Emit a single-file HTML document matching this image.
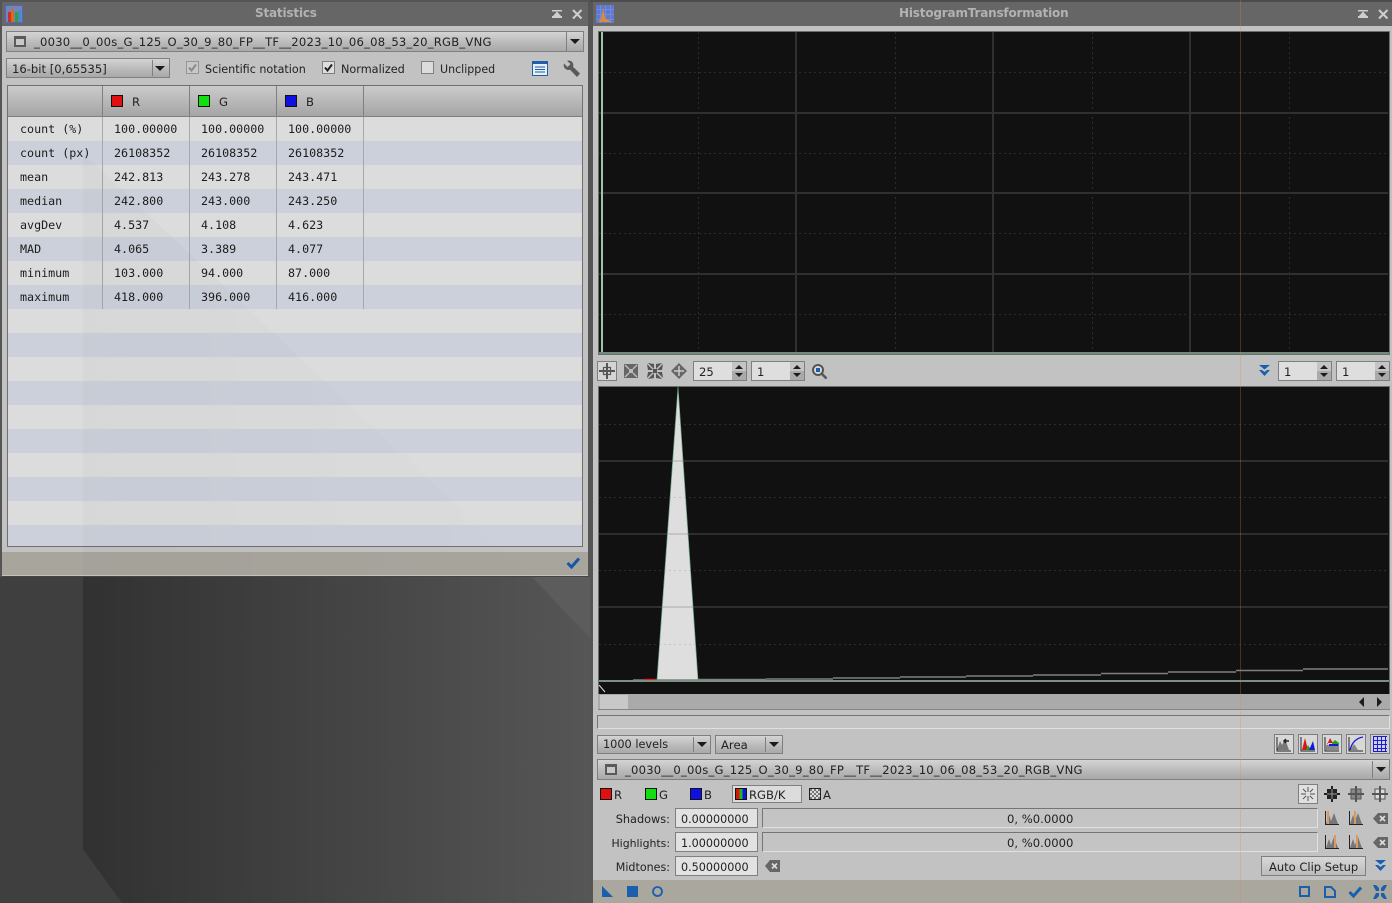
<!DOCTYPE html>
<html lang="en"><head><meta charset="utf-8"><title>Statistics and HistogramTransformation</title>
<style>
html,body{margin:0;padding:0;width:1392px;height:903px;overflow:hidden;background:#3f3f3f}
body{position:relative;font:11.6px "DejaVu Sans","Liberation Sans",sans-serif;color:#222}
div,svg,span.a{position:absolute;box-sizing:border-box}
.t{white-space:nowrap;line-height:14px;height:14px}
.r{text-align:right}
.m{font:11.7px "DejaVu Sans Mono","Liberation Mono",monospace;color:#1c1c1c}
.bar{background:#666}
.title{font-weight:bold;font-size:12px;color:#b2b2b2;letter-spacing:-.18px}
.file{letter-spacing:.22px}
.combo{border:1px solid #7f7f7f;background:linear-gradient(#d4d4d4,#b8b8b8 60%,#a9a9a9)}
.sep{width:1px;background:#7f7f7f;top:2px;bottom:2px}
.arr{width:0;height:0;border-left:5px solid transparent;border-right:5px solid transparent;border-top:5px solid #1c1c1c}
.in{border:1px solid #7f7f7f;background:#dedede}
.trk{border:1px solid;border-color:#757575 #e0e0e0 #e0e0e0 #757575;background:#c4c4c4}
.sw{width:13px;height:13px;border:1px solid #111}
.col{width:1px;top:117px;height:192px;background:#a8a8a8}
.hcol{width:1px;top:86px;height:31px;background:#7f7f7f}
.ib{width:20px;height:20px;border:1px solid #7f7f7f;background:#d8d8d8}
.v{font-size:11.2px}
</style></head><body>

<!-- desktop -->
<svg style="left:0;top:0" width="592" height="903">
<defs><linearGradient id="d" x1="0" x2="1" y1="0" y2="0"><stop offset="0" stop-color="#313131"/><stop offset="1" stop-color="#565656"/></linearGradient></defs>
<rect width="592" height="903" fill="#3f3f3f"/>
<polygon points="83,570 590,570 590,903 122,903 83,849" fill="url(#d)"/>
<polygon points="532,577 590,577 590,638" fill="#5c5c5c"/>
</svg>

<!-- Statistics window -->
<div style="left:0;top:0;width:590px;height:577px;background:#c2c2c2;border:2px solid #555;border-bottom:1px solid #454545;border-left-width:2px"></div>
<div class="bar" style="left:2px;top:2px;width:586px;height:24px"></div>
<div class="t title" style="left:255px;top:6px">Statistics</div>
<svg style="left:5px;top:5px" width="18" height="18"><rect width="18" height="18" fill="#5566b4"/><rect x="1" y="1" width="16" height="16" fill="#7484bc"/><rect x="3" y="7" width="3" height="10" fill="#c83030"/><rect x="6" y="4" width="3" height="13" fill="#d86a20"/><rect x="10" y="7" width="3" height="10" fill="#3a9a40"/><rect x="13" y="5" width="3" height="12" fill="#3a90d0"/></svg>
<svg style="left:552px;top:10px" width="11" height="10"><rect x="0" y="0" width="10" height="1.500" fill="#cfcfcf"/><polygon points="5,1.500 9,6 1,6" fill="#cfcfcf"/><rect x="0" y="6" width="10" height="2" fill="#cfcfcf"/></svg>
<svg style="left:572px;top:9px" width="11" height="11"><path d="M1 1 9.500 9.500M9.500 1 1 9.500" stroke="#cfcfcf" stroke-width="2"/></svg>

<div class="combo" style="left:6px;top:31px;width:578px;height:21px"></div>
<div class="sep" style="left:566px;top:32px;height:19px"></div>
<div class="arr" style="left:570px;top:39px"></div>
<div style="left:14px;top:36px;width:12px;height:11px;border:2px solid #5a5a5a;border-top-width:3px;background:#c8c8c8"></div>
<div class="t file" style="left:34px;top:35px">_0030__0_00s_G_125_O_30_9_80_FP__TF__2023_10_06_08_53_20_RGB_VNG</div>

<div class="combo" style="left:6px;top:58px;width:164px;height:20px"></div>
<div class="sep" style="left:152px;top:60px;height:16px"></div>
<div class="arr" style="left:155px;top:66px"></div>
<div class="t" style="left:12px;top:62px">16-bit [0,65535]</div>

<div style="left:186px;top:61px;width:13px;height:13px;border:1px solid #959595;background:#c8c8c8"></div>
<svg style="left:186px;top:61px" width="13" height="13"><path d="M3 6.500 5.500 9.500 10 3.500" fill="none" stroke="#8a8a8a" stroke-width="2"/></svg>
<div class="t" style="left:205px;top:63px;font-size:11.15px">Scientific notation</div>
<div style="left:322px;top:61px;width:13px;height:13px;border:1px solid #7f7f7f;background:#dedede"></div>
<svg style="left:322px;top:61px" width="13" height="13"><path d="M3 6.500 5.500 9.500 10 3.500" fill="none" stroke="#222" stroke-width="2"/></svg>
<div class="t" style="left:341px;top:63px;font-size:11.25px">Normalized</div>
<div style="left:421px;top:61px;width:13px;height:13px;border:1px solid #7f7f7f;background:#dcdcdc"></div>
<div class="t" style="left:440px;top:63px;font-size:11.05px">Unclipped</div>
<svg style="left:532px;top:61px" width="16" height="15"><rect x=".5" y=".5" width="15" height="14" fill="#e8eef5" stroke="#1f5fa8"/><rect width="16" height="3" fill="#1f5fa8"/><path d="M3 6H13M3 8.500H13M3 11H13" stroke="#1f5fa8"/></svg>
<svg style="left:563px;top:60px" width="18" height="18"><path d="M1 3.500 4.500 7 7.500 4 4 .8C8 -.5 11.500 3 10 6.800L17 13.500 14 17 7 9.800C3.500 11 -.5 7.500 1 3.500Z" fill="#5a5a5a"/></svg>

<!-- table -->
<div style="left:7px;top:85px;width:576px;height:462px;border:1px solid #707070;background:#dcdcdc"></div>
<div style="left:8px;top:86px;width:574px;height:31px;background:linear-gradient(#cbcbcb,#a5a5a5);border-bottom:1px solid #7f7f7f"></div>
<div style="left:8px;top:141px;width:574px;height:24px;background:#ccd0da"></div>
<div style="left:8px;top:189px;width:574px;height:24px;background:#ccd0da"></div>
<div style="left:8px;top:237px;width:574px;height:24px;background:#ccd0da"></div>
<div style="left:8px;top:285px;width:574px;height:24px;background:#ccd0da"></div>
<div style="left:8px;top:333px;width:574px;height:24px;background:#ccd0da"></div>
<div style="left:8px;top:381px;width:574px;height:24px;background:#ccd0da"></div>
<div style="left:8px;top:429px;width:574px;height:24px;background:#ccd0da"></div>
<div style="left:8px;top:477px;width:574px;height:24px;background:#ccd0da"></div>
<div style="left:8px;top:525px;width:574px;height:21px;background:#ccd0da"></div>
<div class="hcol" style="left:102px"></div><div class="hcol" style="left:189px"></div><div class="hcol" style="left:276px"></div><div class="hcol" style="left:363px"></div>
<div class="col" style="left:102px"></div><div class="col" style="left:189px"></div><div class="col" style="left:276px"></div><div class="col" style="left:363px"></div>
<div class="sw" style="left:111px;top:95px;width:12px;height:12px;background:#e01010"></div><div class="t" style="left:132px;top:95px">R</div>
<div class="sw" style="left:198px;top:95px;width:12px;height:12px;background:#10e010"></div><div class="t" style="left:219px;top:95px">G</div>
<div class="sw" style="left:285px;top:95px;width:12px;height:12px;background:#1010e0"></div><div class="t" style="left:306px;top:95px">B</div>

<div class="t m" style="left:20px;top:122px">count (%)</div><div class="t m" style="left:114px;top:122px">100.00000</div><div class="t m" style="left:201px;top:122px">100.00000</div><div class="t m" style="left:288px;top:122px">100.00000</div>
<div class="t m" style="left:20px;top:146px">count (px)</div><div class="t m" style="left:114px;top:146px">26108352</div><div class="t m" style="left:201px;top:146px">26108352</div><div class="t m" style="left:288px;top:146px">26108352</div>
<div class="t m" style="left:20px;top:170px">mean</div><div class="t m" style="left:114px;top:170px">242.813</div><div class="t m" style="left:201px;top:170px">243.278</div><div class="t m" style="left:288px;top:170px">243.471</div>
<div class="t m" style="left:20px;top:194px">median</div><div class="t m" style="left:114px;top:194px">242.800</div><div class="t m" style="left:201px;top:194px">243.000</div><div class="t m" style="left:288px;top:194px">243.250</div>
<div class="t m" style="left:20px;top:218px">avgDev</div><div class="t m" style="left:114px;top:218px">4.537</div><div class="t m" style="left:201px;top:218px">4.108</div><div class="t m" style="left:288px;top:218px">4.623</div>
<div class="t m" style="left:20px;top:242px">MAD</div><div class="t m" style="left:114px;top:242px">4.065</div><div class="t m" style="left:201px;top:242px">3.389</div><div class="t m" style="left:288px;top:242px">4.077</div>
<div class="t m" style="left:20px;top:266px">minimum</div><div class="t m" style="left:114px;top:266px">103.000</div><div class="t m" style="left:201px;top:266px">94.000</div><div class="t m" style="left:288px;top:266px">87.000</div>
<div class="t m" style="left:20px;top:290px">maximum</div><div class="t m" style="left:114px;top:290px">418.000</div><div class="t m" style="left:201px;top:290px">396.000</div><div class="t m" style="left:288px;top:290px">416.000</div>

<div style="left:2px;top:552px;width:586px;height:23px;background:#a8a59d"></div>
<svg style="left:566px;top:556px" width="15" height="14"><path d="M1.500 7 5.500 11 13 2.500" fill="none" stroke="#1558a8" stroke-width="3"/></svg>
<!-- window translucency -->
<svg style="left:0;top:0" width="592" height="577"><defs><linearGradient id="w" x1="0" x2="1" y1="0" y2="0"><stop offset="0" stop-color="#000" stop-opacity=".022"/><stop offset="1" stop-color="#000" stop-opacity=".004"/></linearGradient></defs><polygon points="83,153 83,575 530,575" fill="url(#w)"/></svg>

<!-- Histogram window -->
<div style="left:590px;top:0;width:3px;height:903px;background:#555"></div>
<div style="left:593px;top:0;width:799px;height:903px;background:#c2c2c2"></div>
<div style="left:590px;top:0;width:802px;height:2px;background:#4c4c4c"></div>
<div class="bar" style="left:593px;top:2px;width:799px;height:24px"></div>
<div class="t title" style="left:899px;top:6px">HistogramTransformation</div>
<svg style="left:596px;top:5px" width="18" height="18"><rect width="18" height="18" fill="#5f78d0"/><path d="M4.500 0V18M9.500 0V18M14.500 0V18M0 4.500H18M0 9.500H18M0 14.500H18" stroke="#7f92dc" opacity=".7"/><path d="M2 17 5 14 7 3 9 13 12 15 16 17Z" fill="#dd8a3a"/></svg>
<svg style="left:1358px;top:10px" width="11" height="10"><rect x="0" y="0" width="10" height="1.500" fill="#cfcfcf"/><polygon points="5,1.500 9,6 1,6" fill="#cfcfcf"/><rect x="0" y="6" width="10" height="2" fill="#cfcfcf"/></svg>
<svg style="left:1378px;top:9px" width="11" height="11"><path d="M1 1 9.500 9.500M9.500 1 1 9.500" stroke="#cfcfcf" stroke-width="2"/></svg>

<!-- top plot -->
<svg style="left:598px;top:31px" width="792" height="324" shape-rendering="crispEdges">
<rect width="792" height="324" fill="#111"/>
<rect x=".5" y=".5" width="791" height="323" fill="none" stroke="#6e6e6e"/>
<path d="M198 1V322M395 1V322M592 1V322M1 82H790M1 162H790M1 243H790" stroke="#303030" stroke-width="2"/>
<path d="M100.500 1V322M297.500 1V322M494.500 1V322M691.500 1V322M1 41.500H790M1 122.500H790M1 202.500H790M1 283.500H790" stroke="#2c2c2c" stroke-dasharray="2 3"/>
<rect x="3" y="1" width="2" height="321" fill="#9cc5ac"/>
<rect x="1" y="321" width="790" height="2" fill="#6f8a78"/>
</svg>

<!-- toolbar -->
<div class="ib" style="left:597px;top:361px;background:#d4d4d4"></div>
<svg style="left:597px;top:361px" width="20" height="20" fill="none" stroke="#555" stroke-width="2"><path d="M10 2V18M2 10H18"/><rect x="6.500" y="6.500" width="7" height="7" stroke-width="1.200"/></svg>
<svg style="left:623px;top:363px" width="16" height="16"><rect x="1" y="1" width="14" height="14" fill="#666"/><path d="M2 2 6 6M14 2 10 6M2 14 6 10M14 14 10 10" stroke="#bbb" stroke-width="1.500"/><rect x="6" y="6" width="4" height="4" fill="#bbb"/></svg>
<svg style="left:647px;top:363px" width="16" height="16" fill="#555"><path d="M1 0 7 6V1ZM15 0 9 6V1ZM1 16 7 10V15ZM15 16 9 10V15ZM0 1 6 7H1ZM16 1 10 7H15ZM0 15 6 9H1ZM16 15 10 9H15Z"/><rect x="6" y="6" width="4" height="4"/></svg>
<svg style="left:671px;top:363px" width="16" height="16"><polygon points="8,0 16,8 8,16 0,8" fill="#666"/><path d="M8 3V13M3 8H13" stroke="#ccc" stroke-width="1.500"/></svg>

<div class="in" style="left:693px;top:361px;width:54px;height:20px"></div><div class="t" style="left:699px;top:365px">25</div>
<div class="in" style="left:751px;top:361px;width:54px;height:20px"></div><div class="t" style="left:757px;top:365px">1</div>
<div class="in" style="left:1278px;top:361px;width:54px;height:20px"></div><div class="t" style="left:1284px;top:365px">1</div>
<div class="in" style="left:1336px;top:361px;width:54px;height:20px"></div><div class="t" style="left:1342px;top:365px">1</div>
<svg style="left:732px;top:362px" width="15" height="18"><rect width="14" height="18" fill="#c4c4c4"/><rect y="9" width="14" height="9" fill="#aaa"/><path d="M7 3 11 7H3ZM7 15 11 11H3Z" fill="#1c1c1c"/></svg>
<svg style="left:790px;top:362px" width="15" height="18"><rect width="14" height="18" fill="#c4c4c4"/><rect y="9" width="14" height="9" fill="#aaa"/><path d="M7 3 11 7H3ZM7 15 11 11H3Z" fill="#1c1c1c"/></svg>
<svg style="left:1317px;top:362px" width="15" height="18"><rect width="14" height="18" fill="#c4c4c4"/><rect y="9" width="14" height="9" fill="#aaa"/><path d="M7 3 11 7H3ZM7 15 11 11H3Z" fill="#1c1c1c"/></svg>
<svg style="left:1375px;top:362px" width="15" height="18"><rect width="14" height="18" fill="#c4c4c4"/><rect y="9" width="14" height="9" fill="#aaa"/><path d="M7 3 11 7H3ZM7 15 11 11H3Z" fill="#1c1c1c"/></svg>
<svg style="left:811px;top:363px" width="17" height="17"><circle cx="7" cy="7" r="5" fill="#d8d8d8" stroke="#555" stroke-width="2"/><rect x="5" y="5" width="4" height="4" fill="#1a5fae"/><path d="M10.500 10.500 15.500 15.500" stroke="#555" stroke-width="2.500"/></svg>
<svg style="left:1259px;top:365px" width="12" height="12" fill="#1a5fae"><path d="M0 0H11L5.500 4.500ZM0 5H3L5.500 7 8 5H11L5.500 11Z"/></svg>

<!-- bottom plot -->
<svg style="left:598px;top:386px" width="792" height="309">
<rect width="792" height="309" fill="#111"/>
<rect x=".5" y=".5" width="791" height="320" fill="none" stroke="#6e6e6e"/>
<polygon points="80,1 59,294 100,294" fill="#dedede" stroke="#6da883" stroke-width=".7"/>
<g shape-rendering="crispEdges" stroke="#808080" opacity=".26">
<path d="M1 75H790M1 148H790M1 221H790" stroke-width="2"/>
<path d="M1 38.500H790M1 111.500H790M1 184.500H790M1 258.500H790" stroke-dasharray="2 3"/>
</g>
<path d="M35 294H100M100 293.500H168M168 293H235M235 292H302M302 291H368M368 290H435M435 289H503M503 287.500H570M570 286H638M638 284.500H705M705 283H790" stroke="#808080" stroke-width="1.600" fill="none"/>
<path d="M47 293.500H57" stroke="#e02020" stroke-width="1.500"/>
<rect x="1" y="294" width="790" height="2" fill="#7d8e82"/>
<path d="M1 299 7 306" stroke="#ddd" stroke-width="1"/>
</svg>
<div style="left:598px;top:694px;width:792px;height:16px;background:#aaa;border-bottom:1px solid #858585"></div>
<div style="left:600px;top:695px;width:28px;height:14px;background:#c8c8c8"></div>
<svg style="left:1358px;top:697px" width="26" height="10" fill="#1c1c1c"><path d="M1 5 6 0V10ZM24 5 19 0V10Z"/></svg>

<div class="trk" style="left:597px;top:715px;width:793px;height:14px"></div>

<!-- combos -->
<div class="combo" style="left:597px;top:735px;width:114px;height:19px"></div><div class="sep" style="left:693px;top:737px;height:15px"></div><div class="arr" style="left:697px;top:742px"></div>
<div class="t" style="left:603px;top:738px;font-size:11.3px">1000 levels</div>
<div class="combo" style="left:715px;top:735px;width:68px;height:19px"></div><div class="sep" style="left:765px;top:737px;height:15px"></div><div class="arr" style="left:769px;top:742px"></div>
<div class="t" style="left:721px;top:738px">Area</div>

<div class="ib" style="left:1274px;top:734px"></div>
<svg style="left:1276px;top:736px" width="16" height="16"><path d="M1 14 4 5 6 9 9 3 13 14Z" fill="#777"/><path d="M1 1V15H15" fill="none" stroke="#222"/><path d="M13 5H8M10 3 8 5 10 7" fill="none" stroke="#222" stroke-width="1.500"/></svg>
<div class="ib" style="left:1298px;top:734px"></div>
<svg style="left:1300px;top:736px" width="16" height="16"><path d="M1 1V15H15" fill="none" stroke="#222"/><path d="M2 14 5 2 8 14Z" fill="#d81818"/><path d="M6 14 8 9 11 14Z" fill="#18a818"/><path d="M9 14 13 5 15 14Z" fill="#1818d8"/></svg>
<div class="ib" style="left:1322px;top:734px"></div>
<svg style="left:1324px;top:736px" width="16" height="16"><path d="M1 1V15H15" fill="none" stroke="#222"/><rect x="2" y="9" width="13" height="5" fill="#888"/><path d="M3 9 6 2 9 7H3Z" fill="#d81818"/><path d="M8 7 11 4 15 7 15 9H8Z" fill="#18a818"/><path d="M5 8H14V10H5Z" fill="#1818d8"/></svg>
<div class="ib" style="left:1346px;top:734px"></div>
<svg style="left:1348px;top:736px" width="16" height="16"><path d="M1 1V15H15" fill="none" stroke="#222"/><path d="M2 14 6 8 10 14Z" fill="#888"/><path d="M2 14C4 6 9 2 15 1" fill="none" stroke="#1818d8" stroke-width="1.300"/></svg>
<div class="ib" style="left:1370px;top:734px;background:#cfcfe0"></div>
<svg style="left:1372px;top:736px" width="16" height="16" shape-rendering="crispEdges"><path d="M1 .5H15M1 4.500H15M1 8.500H15M1 12.500H15M1 15.500H15M1.500 1V16M5.500 1V16M9.500 1V16M13.500 1V16" stroke="#1a1ad0"/></svg>

<div class="combo" style="left:597px;top:759px;width:793px;height:21px"></div><div class="sep" style="left:1372px;top:761px;height:17px"></div><div class="arr" style="left:1376px;top:767px"></div>
<div style="left:605px;top:764px;width:12px;height:11px;border:2px solid #5a5a5a;border-top-width:3px;background:#c8c8c8"></div>
<div class="t file" style="left:625px;top:763px">_0030__0_00s_G_125_O_30_9_80_FP__TF__2023_10_06_08_53_20_RGB_VNG</div>

<!-- channels -->
<div class="sw" style="left:600px;top:788px;width:12px;height:12px;background:#e01010"></div><div class="t" style="left:614px;top:788px">R</div>
<div class="sw" style="left:645px;top:788px;width:12px;height:12px;background:#10e010"></div><div class="t" style="left:659px;top:788px">G</div>
<div class="sw" style="left:690px;top:788px;width:12px;height:12px;background:#1010e0"></div><div class="t" style="left:704px;top:788px">B</div>
<div style="left:732px;top:785px;width:70px;height:18px;border:1px solid #7f7f7f;background:#dcdcdc"></div>
<div class="sw" style="left:735px;top:788px;width:12px;height:12px;background:linear-gradient(90deg,#e01010 33%,#10c010 33% 66%,#1010e0 66%)"></div>
<div class="t" style="left:749px;top:788px">RGB/K</div>
<svg style="left:809px;top:788px" width="12" height="12"><rect width="12" height="12" fill="#ddd"/><path d="M1 1H3V3H1ZM5 1H7V3H5ZM9 1H11V3H9ZM3 3H5V5H3ZM7 3H9V5H7ZM1 5H3V7H1ZM5 5H7V7H5ZM9 5H11V7H9ZM3 7H5V9H3ZM7 7H9V9H7ZM1 9H3V11H1ZM5 9H7V11H5ZM9 9H11V11H9Z" fill="#777"/><rect x=".5" y=".5" width="11" height="11" fill="none" stroke="#222"/></svg>
<div class="t" style="left:823px;top:788px">A</div>

<div class="ib" style="left:1298px;top:784px;background:#e0e0e0"></div>
<svg style="left:1300px;top:786px" width="16" height="16" stroke="#555"><path d="M8 1V15M1 8H15M3 3 13 13M13 3 3 13"/><rect x="6" y="6" width="4" height="4" fill="#e0e0e0" stroke="none"/></svg>
<svg style="left:1324px;top:786px" width="16" height="16"><rect x="3" y="3" width="10" height="10" fill="#222"/><path d="M8 0V16M0 8H16" stroke="#222" stroke-width="2"/><path d="M8 3V13M3 8H13" stroke="#999"/></svg>
<svg style="left:1348px;top:786px" width="16" height="16"><rect x="3" y="3" width="10" height="10" fill="#888" stroke="#555"/><path d="M8 0V16M0 8H16" stroke="#555" stroke-width="2"/></svg>
<svg style="left:1372px;top:786px" width="16" height="16"><rect x="3" y="3" width="10" height="10" fill="#ddd" stroke="#555"/><path d="M8 0V16M0 8H16" stroke="#555" stroke-width="2"/></svg>

<!-- levels -->
<div class="t r" style="left:590px;width:80px;top:813px;font-size:11.3px">Shadows:</div>
<div class="in" style="left:675px;top:808px;width:83px;height:20px;background:#e2e2e2"></div><div class="t v" style="left:681px;top:813px">0.00000000</div>
<div class="trk" style="left:762px;top:808px;width:556px;height:20px"></div><div class="t" style="left:1007px;top:812px">0, %0.0000</div>
<div class="t r" style="left:590px;width:80px;top:837px;font-size:10.9px">Highlights:</div>
<div class="in" style="left:675px;top:832px;width:83px;height:20px;background:#e2e2e2"></div><div class="t v" style="left:681px;top:837px">1.00000000</div>
<div class="trk" style="left:762px;top:832px;width:556px;height:20px"></div><div class="t" style="left:1007px;top:836px">0, %0.0000</div>
<div class="t r" style="left:590px;width:80px;top:861px;font-size:11.1px">Midtones:</div>
<div class="in" style="left:675px;top:856px;width:83px;height:20px;background:#e2e2e2"></div><div class="t v" style="left:681px;top:861px">0.50000000</div>
<svg style="left:765px;top:860px" width="15" height="12"><path d="M0 6 5 0H15V12H5Z" fill="#666"/><path d="M7 3.500 12 8.500M12 3.500 7 8.500" stroke="#ddd" stroke-width="1.600"/></svg>

<svg style="left:1325px;top:811px" width="14" height="14"><path d="M1 13 4 4 6 10 9 2 13 13Z" fill="#777"/><path d="M.5 0V13.500H14" fill="none" stroke="#222"/><rect x="2" y="0" width="2" height="13" fill="#d99a5c"/></svg>
<svg style="left:1349px;top:811px" width="14" height="14"><path d="M1 13 4 4 6 10 9 2 13 13Z" fill="#777"/><path d="M.5 0V13.500H14" fill="none" stroke="#222"/><rect x="5" y="0" width="2" height="13" fill="#d99a5c"/></svg>
<svg style="left:1373px;top:813px" width="15" height="11"><path d="M0 5.500 5 0H15V11H5Z" fill="#666"/><path d="M7 3 12 8M12 3 7 8" stroke="#ddd" stroke-width="1.600"/></svg>
<svg style="left:1325px;top:835px" width="14" height="14"><path d="M1 13 4 4 6 10 9 2 13 13Z" fill="#777"/><path d="M.5 0V13.500H14" fill="none" stroke="#222"/><rect x="9" y="0" width="2" height="13" fill="#d99a5c"/></svg>
<svg style="left:1349px;top:835px" width="14" height="14"><path d="M1 13 4 4 6 10 9 2 13 13Z" fill="#777"/><path d="M.5 0V13.500H14" fill="none" stroke="#222"/><rect x="7" y="0" width="2" height="13" fill="#d99a5c"/></svg>
<svg style="left:1373px;top:837px" width="15" height="11"><path d="M0 5.500 5 0H15V11H5Z" fill="#666"/><path d="M7 3 12 8M12 3 7 8" stroke="#ddd" stroke-width="1.600"/></svg>

<div style="left:1261px;top:856px;width:105px;height:20px;border:1px solid #7f7f7f;background:linear-gradient(#d8d8d8,#bcbcbc)"></div>
<div class="t" style="left:1269px;top:860px;font-size:11.5px">Auto Clip Setup</div>
<svg style="left:1375px;top:860px" width="12" height="12" fill="#1a5fae"><path d="M0 0H11L5.500 4.500ZM0 5H3L5.500 7 8 5H11L5.500 11Z"/></svg>

<!-- footer -->
<div style="left:593px;top:880px;width:799px;height:23px;background:#aaa79f"></div>
<svg style="left:602px;top:886px" width="12" height="12"><path d="M0 0 11 11H0Z" fill="#1a5fae"/></svg>
<div style="left:627px;top:886px;width:11px;height:11px;background:#1a5fae"></div>
<svg style="left:652px;top:886px" width="12" height="12"><circle cx="5.500" cy="5.500" r="4.500" fill="none" stroke="#1a5fae" stroke-width="1.800"/></svg>
<svg style="left:1299px;top:886px" width="12" height="12"><rect x="1" y="1" width="9" height="9" fill="none" stroke="#1a5fae" stroke-width="2"/></svg>
<svg style="left:1324px;top:886px" width="12" height="12"><path d="M1 1H7L11 5V11H1Z" fill="none" stroke="#1a5fae" stroke-width="2"/></svg>
<svg style="left:1348px;top:885px" width="15" height="14"><path d="M1.500 7 5.500 11 13 2.500" fill="none" stroke="#1a5fae" stroke-width="3"/></svg>
<svg style="left:1373px;top:885px" width="14" height="14" fill="#1a5fae"><path d="M0 0H3L6 3V6H3ZM14 0H11L8 3V6H11ZM0 14H3L6 11V8H3ZM14 14H11L8 11V8H11Z"/></svg>

<!-- faint vertical overlay -->
<div style="left:1240px;top:0;width:1px;height:903px;background:rgba(205,140,90,.28)"></div>
</body></html>
